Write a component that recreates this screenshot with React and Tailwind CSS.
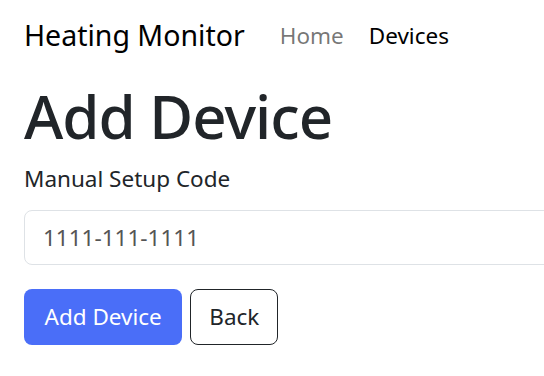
import React, { useState } from 'react';

function App() {
  const [code, setCode] = useState('1111-111-1111');

  return (
    <div className="min-h-screen bg-white text-[#212529] overflow-hidden" style={{ fontFamily: '"Noto Sans", "Open Sans", sans-serif' }}>
      <nav className="flex items-center pl-6 pt-[10px] h-[60px]">
        <a href="#" className="text-[28.5px] text-black leading-none mr-[35px]">Heating Monitor</a>
        <div className="flex gap-[25px] text-[22.5px] leading-none mt-[3px]">
          <a href="#" className="text-black/55">Home</a>
          <a href="#" className="text-black">Devices</a>
        </div>
      </nav>

      <main className="pl-6">
        <h1 className="text-[60px] font-medium leading-none mt-[26px] tracking-[-1px]">Add Device</h1>

        <label className="block text-[22.5px] mt-[22px] leading-none">Manual Setup Code</label>
        <input
          value={code}
          onChange={(e) => setCode(e.target.value)}
          className="block mt-[19px] w-[560px] h-[55px] border border-[#dee2e6] rounded-lg px-[18px] text-[22.5px] text-[#555] outline-none"
        />

        <div className="flex gap-2 mt-[24px]">
          <button className="h-14 px-[20.5px] rounded-lg bg-[#4a6ef8] text-white text-[22.5px]">Add Device</button>
          <button className="h-14 px-[18px] rounded-lg border border-[#212529] text-[22.5px]">Back</button>
        </div>
      </main>
    </div>
  );
}

export default App;
